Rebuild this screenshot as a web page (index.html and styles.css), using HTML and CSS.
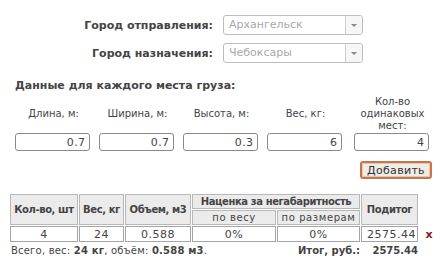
FILE: index.html
```html
<!DOCTYPE html>
<html lang="ru">
<head>
  <meta charset="UTF-8" />
  <title>Расчёт доставки</title>
  <link rel="stylesheet" href="styles.css">
</head>
<body>

  <div class="calc">
    <div class="route">
      <label class="route-label">Город отправления:</label>
      <div class="select">
        <span class="select-value">Архангельск</span>
        <span class="select-btn"><i></i></span>
      </div>
      <label class="route-label">Город назначения:</label>
      <div class="select">
        <span class="select-value">Чебоксары</span>
        <span class="select-btn"><i></i></span>
      </div>
    </div>

    <h3 class="cargo-title">Данные для каждого места груза:</h3>

    <div class="cargo-grid">
      <div class="cargo-label">Длина, м:</div>
      <div class="cargo-label">Ширина, м:</div>
      <div class="cargo-label">Высота, м:</div>
      <div class="cargo-label">Вес, кг:</div>
      <div class="cargo-label">Кол-во<br>одинаковых<br>мест:</div>
      <input class="cargo-input" type="text" value="0.7">
      <input class="cargo-input" type="text" value="0.7">
      <input class="cargo-input" type="text" value="0.3">
      <input class="cargo-input" type="text" value="6">
      <input class="cargo-input" type="text" value="4">
    </div>

    <div class="add-row">
      <button class="add-btn">Добавить</button>
    </div>

    <table class="result">
      <colgroup>
        <col style="width: 68px">
        <col style="width: 45px">
        <col style="width: 66px">
        <col style="width: 84px">
        <col style="width: 83px">
        <col style="width: 57px">
        <col style="width: 14px">
      </colgroup>
      <thead>
        <tr>
          <th rowspan="2">Кол-во, шт</th>
          <th rowspan="2">Вес, кг</th>
          <th rowspan="2">Объем, м3</th>
          <th colspan="2">Наценка за негабаритность</th>
          <th rowspan="2">Подитог</th>
          <td rowspan="2" class="c-del"></td>
        </tr>
        <tr>
          <th class="sub">по весу</th>
          <th class="sub">по размерам</th>
        </tr>
      </thead>
      <tbody>
        <tr>
          <td>4</td>
          <td>24</td>
          <td>0.588</td>
          <td>0%</td>
          <td>0%</td>
          <td class="num">2575.44</td>
          <td class="c-del"><span class="del">x</span></td>
        </tr>
      </tbody>
      <tfoot>
        <tr>
          <td colspan="3" class="total-info">Всего, вес: <b>24 кг</b>, объём: <b>0.588 м3</b>.</td>
          <td colspan="2" class="total-label">Итог, руб.:</td>
          <td class="total-sum">2575.44</td>
          <td class="c-del"></td>
        </tr>
      </tfoot>
    </table>
  </div>

</body>
</html>
```

FILE: styles.css
```css
body {
  margin: 0;
  background: #fff;
  color: #333;
  font-family: "DejaVu Sans", Verdana, sans-serif;
  font-size: 10px;
}

.calc {
  width: 443px;
  padding-top: 15px;
}

/* Cities */
.route {
  display: grid;
  grid-template-columns: 213px 140px;
  column-gap: 10px;
  row-gap: 8px;
  align-items: center;
}

.route-label {
  text-align: right;
  font-weight: bold;
  font-size: 11px;
  color: #444;
}

.select {
  display: flex;
  height: 18px;
  border: 1px solid #bdbdbd;
  border-radius: 3px;
  background: #fff;
  overflow: hidden;
}

.select-value {
  flex: 1;
  padding-left: 5px;
  line-height: 18px;
  font-size: 11px;
  color: #a8a8a8;
}

.select-btn {
  width: 16px;
  border-left: 1px solid #d0d0d0;
  background: #f6f6f6;
  display: flex;
  align-items: center;
  justify-content: center;
}

.select-btn i {
  border-left: 3px solid transparent;
  border-right: 3px solid transparent;
  border-top: 3px solid #888;
}

/* Cargo */
.cargo-title {
  margin: 16px 0 0 15px;
  font-size: 11px;
  font-weight: bold;
  color: #444;
}

.cargo-grid {
  display: grid;
  grid-template-columns: repeat(4, 84px) 90px;
  grid-template-rows: 37px auto;
  margin: 3px 0 0 10px;
  row-gap: 1px;
}

.cargo-label {
  align-self: center;
  text-align: center;
  line-height: 12px;
  color: #444;
  padding-left: 3px;
}

.cargo-input {
  justify-self: center;
  width: 75px;
  height: 18px;
  box-sizing: border-box;
  border: 1px solid #8a8a8a;
  border-radius: 3px;
  padding: 0 3px 0 0;
  text-align: right;
  font-family: inherit;
  font-size: 11px;
  letter-spacing: 0.4px;
  color: #444;
}

.add-row {
  display: flex;
  justify-content: flex-end;
  padding: 10px 11px 0 0;
}

.add-btn {
  height: 18px;
  width: 72px;
  padding: 0;
  border: 2px solid #c4774f;
  border-radius: 3px;
  background: #f1ece6;
  box-shadow: inset 0 0 0 1px #e8c6b0;
  font-family: inherit;
  font-size: 11px;
  letter-spacing: 0.3px;
  color: #333;
}

/* Result table */
.result {
  margin: 14px 0 0 9px;
  border-spacing: 1px;
  table-layout: fixed;
  width: 425px;
  color: #444;
}

.result th {
  background: #ebebeb;
  border: 1px solid #b8b8b8;
  font-size: 10px;
  letter-spacing: -0.4px;
  height: 13px;
  padding: 0;
  white-space: nowrap;
  overflow: hidden;
}

.result th.sub {
  font-weight: normal;
  letter-spacing: 0.6px;
}

.result tbody td {
  border: 1px solid #a5a5a5;
  text-align: center;
  font-size: 11px;
  letter-spacing: 0.5px;
  height: 14px;
  padding: 0;
}

.result tbody td.num {
  text-align: right;
  padding-right: 1px;
}

.result td.c-del {
  border: none;
  text-align: right;
}

.del {
  color: #8b1a1a;
  font-weight: bold;
  font-size: 11px;
}

.result tfoot td {
  padding: 2px 0 0;
  font-size: 10px;
  white-space: nowrap;
}

.result tfoot td.total-info {
  padding-left: 1px;
  letter-spacing: 0.2px;
}

.total-label,
.total-sum {
  text-align: right;
  font-weight: bold;
}
```
